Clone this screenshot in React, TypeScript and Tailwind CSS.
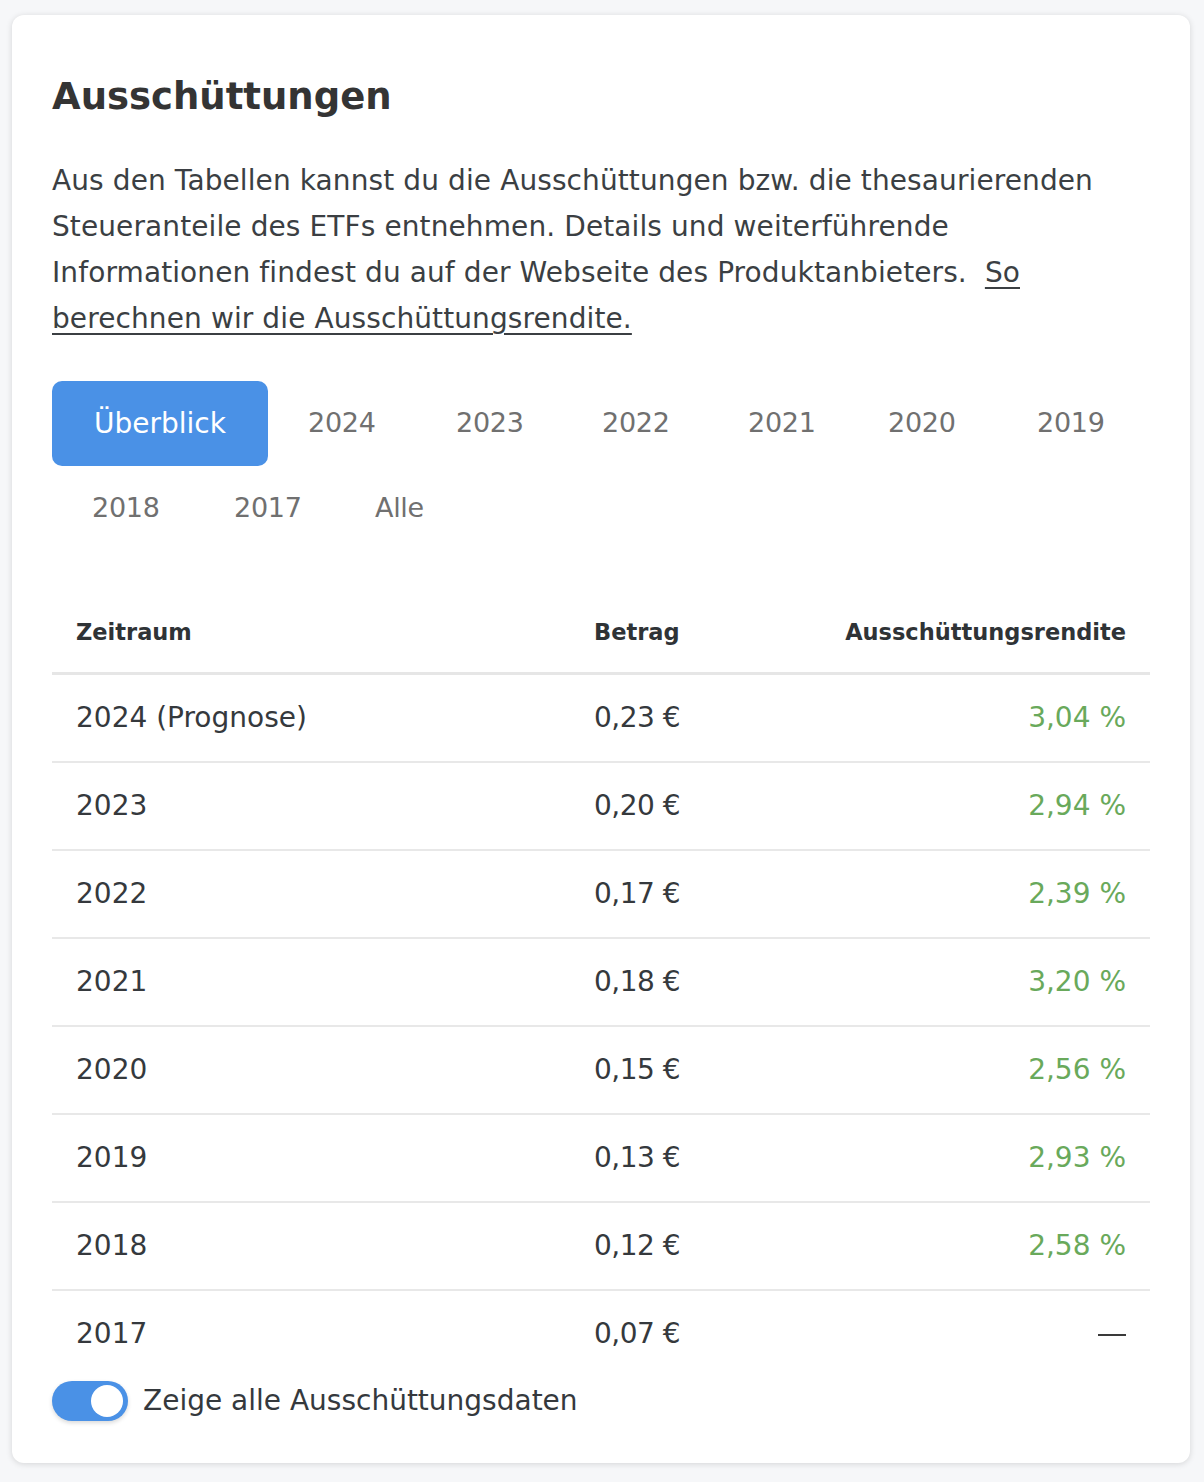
const rows: { period: string; amount: string; yieldPct: string | null }[] = [
  { period: '2024 (Prognose)', amount: '0,23 €', yieldPct: '3,04 %' },
  { period: '2023', amount: '0,20 €', yieldPct: '2,94 %' },
  { period: '2022', amount: '0,17 €', yieldPct: '2,39 %' },
  { period: '2021', amount: '0,18 €', yieldPct: '3,20 %' },
  { period: '2020', amount: '0,15 €', yieldPct: '2,56 %' },
  { period: '2019', amount: '0,13 €', yieldPct: '2,93 %' },
  { period: '2018', amount: '0,12 €', yieldPct: '2,58 %' },
  { period: '2017', amount: '0,07 €', yieldPct: null },
];

const tabRow1: { label: string; w: string }[] = [
  { label: '2024', w: 'w-[148px]' },
  { label: '2023', w: 'w-[146px]' },
  { label: '2022', w: 'w-[146px]' },
  { label: '2021', w: 'w-[140px]' },
  { label: '2020', w: 'w-[149px]' },
  { label: '2019', w: 'w-[141px]' },
];
const tabRow2: { label: string; w: string }[] = [
  { label: '2018', w: 'w-[142px]' },
  { label: '2017', w: 'w-[141px]' },
  { label: 'Alle', w: 'w-[131px]' },
];

function Tab({ label, w }: { label: string; w: string }) {
  return (
    <div className={`${w} h-[85px] pl-[40px] flex items-center whitespace-nowrap text-[#707070] text-[27px] tracking-[-0.3px]`}>
      {label}
    </div>
  );
}

export default function App() {
  return (
    <div
      className="min-h-[1482px] w-[1204px] bg-[#f6f7f9] pt-[15px] pl-[12px]"
      style={{ fontFamily: '"DejaVu Sans", sans-serif' }}
    >
      <div className="w-[1178px] h-[1448px] rounded-[12px] bg-white shadow-[0_1px_6px_rgba(0,0,0,0.14)] px-[40px] pt-[58px]">
        <h1 className="text-[37px] leading-[48px] font-bold text-[#343434]">Ausschüttungen</h1>

        <p className="mt-[37px] text-[28px] leading-[46px] text-[#3b3f43] tracking-[0.1px]">
          Aus den Tabellen kannst du die Ausschüttungen bzw. die thesaurierenden
          <br />
          Steueranteile des ETFs entnehmen. Details und weiterführende
          <br />
          Informationen findest du auf der Webseite des Produktanbieters.{'\u00a0 '}
          <a className="underline decoration-[2px] underline-offset-[5px] text-[#3b3f43]">So</a>
          <br />
          <a className="underline decoration-[2px] underline-offset-[5px] text-[#3b3f43]">
            berechnen wir die Ausschüttungsrendite.
          </a>
        </p>

        <div className="mt-[39px] flex">
          <div className="w-[216px] h-[85px] flex items-center justify-center rounded-[10px] bg-[#4a91e6] text-white text-[28px] whitespace-nowrap">
            Überblick
          </div>
          {tabRow1.map((t) => (
            <Tab key={t.label} label={t.label} w={t.w} />
          ))}
        </div>
        <div className="flex">
          {tabRow2.map((t) => (
            <Tab key={t.label} label={t.label} w={t.w} />
          ))}
        </div>

        <div className="mt-[37px]">
          <div className="grid grid-cols-[518px_1fr_auto] h-[87px] pt-[6px] items-center border-b-[3px] border-[#e6e6e6] text-[22.5px] font-bold text-[#2f3336]">
            <div className="pl-[24px]">Zeitraum</div>
            <div className="pl-[24px]">Betrag</div>
            <div className="pr-[24px] text-right">Ausschüttungsrendite</div>
          </div>
          {rows.map((r, i) => (
            <div
              key={r.period}
              className={
                i < rows.length - 1
                  ? 'grid grid-cols-[518px_1fr_auto] h-[88px] items-center border-b-[2px] border-[#e8e8e8] text-[28px] text-[#35393d]'
                  : 'grid grid-cols-[518px_1fr_auto] h-[86px] items-center text-[28px] text-[#35393d]'
              }
            >
              <div className="pl-[24px]">{r.period}</div>
              <div className="pl-[24px] tracking-[-0.5px]">{r.amount}</div>
              <div className="pr-[24px] text-right">
                {r.yieldPct ? (
                  <span className="text-[#69a95b]">{r.yieldPct}</span>
                ) : (
                  <span className="inline-block w-[28px] h-[2px] bg-[#3a3a3a] align-middle"></span>
                )}
              </div>
            </div>
          ))}
        </div>

        <div className="mt-[3px] flex items-center">
          <div className="w-[76px] h-[40px] rounded-full bg-[#4a91e6] flex items-center justify-end pr-[5px] shadow-[0_2px_4px_rgba(0,0,0,0.15)]">
            <div className="w-[32px] h-[32px] rounded-full bg-white"></div>
          </div>
          <span className="ml-[15px] text-[28px] text-[#35393d]">Zeige alle Ausschüttungsdaten</span>
        </div>
      </div>
    </div>
  );
}
